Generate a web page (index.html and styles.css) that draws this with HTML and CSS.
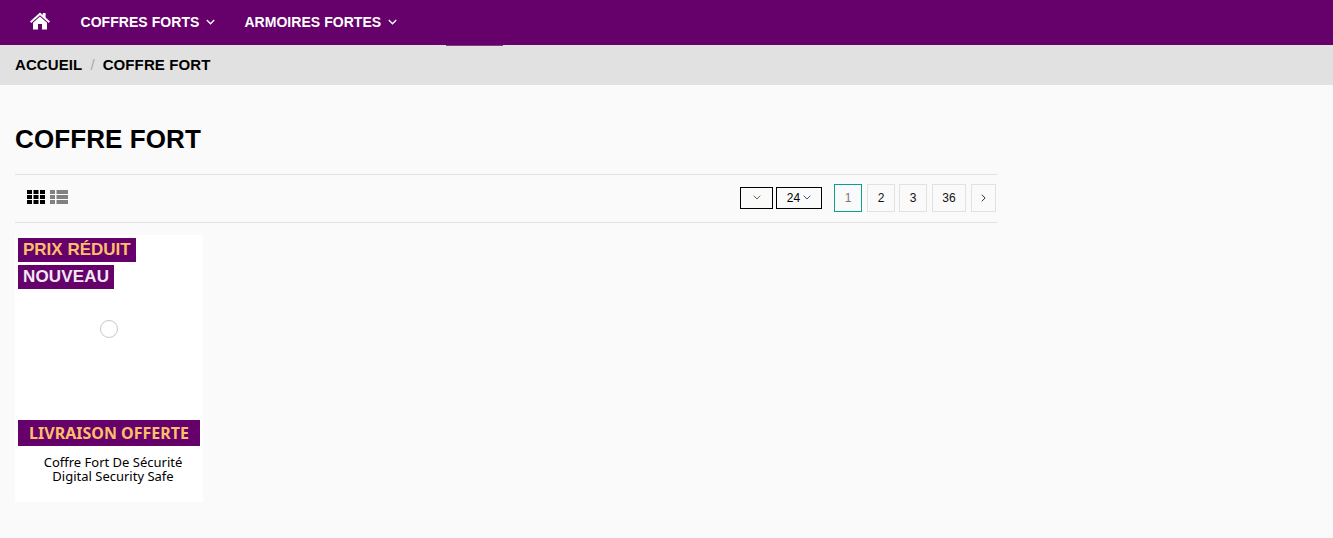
FILE: index.html
```html
<!DOCTYPE html>
<html lang="fr">
<head>
<meta charset="utf-8">
<title>Coffre fort</title>
<link rel="stylesheet" href="styles.css">
</head>
<body>
<header class="topbar">
  <a class="home" href="#" aria-label="Accueil">
    <svg viewBox="0 0 20 18" width="20" height="18"><path fill="#fff" d="M10 0.5 L12.800 3 V1 H15.600 V5.500 L20 9.500 L18.800 10.900 L10 3.300 L1.200 10.900 L0 9.500 Z M10 4.600 L17 10.700 V17.500 H12 V12 H8 V17.500 H3 V10.700 Z"/></svg>
  </a>
  <nav class="menu">
    <a class="menu-item" href="#">COFFRES FORTS <svg class="chev" viewBox="0 0 9 6" width="9" height="6"><path d="M.8 1 4.500 4.700 8.200 1" fill="none" stroke="#fff" stroke-width="1.400"/></svg></a>
    <a class="menu-item" href="#">ARMOIRES FORTES <svg class="chev" viewBox="0 0 9 6" width="9" height="6"><path d="M.8 1 4.500 4.700 8.200 1" fill="none" stroke="#fff" stroke-width="1.400"/></svg></a>
  </nav>
  <span class="marker"></span>
</header>
<div class="crumbs">
  <a href="#">ACCUEIL</a><span class="sep">/</span><a href="#">COFFRE FORT</a>
</div>
<main class="content">
  <h1 class="title">COFFRE FORT</h1>
  <div class="toolbar">
    <div class="views">
      <svg class="view" viewBox="0 0 18 14" width="18" height="14"><path fill="#000" d="M0 0h5v4H0zM6.500 0h5v4h-5zM13 0h5v4h-5zM0 5h5v4H0zM6.500 5h5v4h-5zM13 5h5v4h-5zM0 10h5v4H0zM6.500 10h5v4h-5zM13 10h5v4h-5z"/></svg>
      <svg class="view" viewBox="0 0 18 14" width="18" height="14"><path fill="#808080" d="M0 0h5v4H0zM6.500 0H18v4H6.500zM0 5h5v4H0zM6.500 5H18v4H6.500zM0 10h5v4H0zM6.500 10H18v4H6.500z"/></svg>
    </div>
    <div class="controls">
      <div class="selects">
        <div class="select sel-empty"><svg viewBox="0 0 8 5" width="8" height="5"><path d="M.7.7 4 4 7.300.7" fill="none" stroke="#6b6440" stroke-width="1"/></svg></div>
        <div class="select sel-count">24 <svg viewBox="0 0 8 5" width="8" height="5"><path d="M.7.7 4 4 7.300.7" fill="none" stroke="#33558a" stroke-width="1"/></svg></div>
      </div>
      <div class="pages">
        <a class="page current" href="#">1</a>
        <a class="page" href="#">2</a>
        <a class="page third" href="#">3</a>
        <a class="page wide" href="#">36</a>
        <a class="page" href="#"><svg viewBox="0 0 5 8" width="5" height="8"><path d="M.8.7 4.100 4 .8 7.300" fill="none" stroke="#333" stroke-width="1"/></svg></a>
      </div>
    </div>
  </div>
  <article class="card">
    <div class="labels">
      <span class="label sale">PRIX RÉDUIT</span>
      <span class="label new">NOUVEAU</span>
    </div>
    <div class="spinner-zone"><span class="spinner"></span></div>
    <div class="shipping">LIVRAISON OFFERTE</div>
    <a class="name" href="#">Coffre Fort De Sécurité<br>Digital Security Safe</a>
  </article>
</main>
</body>
</html>
```
FILE: styles.css
```css
* { box-sizing: border-box; }
html, body { margin: 0; padding: 0; }
body {
  height: 538px;
  overflow: hidden;
  background: #fafafa;
  color: #000;
  font-family: "Liberation Sans", Arial, sans-serif;
}
a { color: inherit; text-decoration: none; }

.topbar {
  position: relative;
  display: flex;
  align-items: center;
  height: 45px;
  padding: 0 0 2px 30px;
  background: #66006a;
}
.home { display: flex; width: 20px; height: 18px; margin-top: -2px; }
.menu { display: flex; gap: 29px; margin-left: 30.500px; }
.menu-item {
  display: flex;
  align-items: center;
  gap: 7px;
  color: #fff;
  font-size: 14px;
  font-weight: 700;
  letter-spacing: 0.050px;
  line-height: 16px;
}
.marker {
  position: absolute;
  left: 446px;
  bottom: -1px;
  width: 57px;
  height: 1px;
  background: #7d3f80;
}

.crumbs {
  display: flex;
  align-items: center;
  height: 40px;
  padding: 0 0 1px 15px;
  background: #e1e1e1;
  font-size: 15px;
  font-weight: 700;
  letter-spacing: 0.100px;
  line-height: 18px;
}
.sep { margin: 0 8px; color: #aaa; font-weight: 400; }

.content { width: 997px; padding-left: 15px; }
.title {
  margin: 0;
  padding-top: 39px;
  height: 89px;
  font-size: 26px;
  font-weight: 700;
  letter-spacing: 0.100px;
  line-height: 30px;
}
.toolbar {
  display: flex;
  justify-content: space-between;
  align-items: center;
  height: 49px;
  padding: 0 1px 2px 12px;
  border-top: 1px solid #e1e1e1;
  border-bottom: 1px solid #e1e1e1;
}
.views { display: flex; gap: 5px; margin-top: -1px; }
.controls { display: flex; align-items: center; gap: 12px; }
.selects { display: flex; gap: 3px; }
.select {
  display: flex;
  align-items: center;
  justify-content: center;
  height: 22px;
  border: 1px solid #000;
  font-size: 12px;
}
.sel-empty { width: 33px; }
.sel-count { width: 46px; gap: 3px; }
.pages { display: flex; gap: 5px; }
.page {
  display: flex;
  align-items: center;
  justify-content: center;
  width: 28px;
  height: 28px;
  border: 1px solid #e1e1e1;
  font-size: 12px;
  color: #111;
}
.page.third { margin-left: -1px; }
.page.wide { width: 34px; }
.page.current { border-color: #0aa28f; color: #777; }
.page:last-child { width: 25px; }

.card {
  display: flex;
  flex-direction: column;
  width: 188px;
  height: 267px;
  margin-top: 12px;
  padding: 3px 3px 0;
  background: #fff;
  text-align: center;
}
.labels { display: flex; flex-direction: column; align-items: flex-start; gap: 3px; }
.label {
  height: 24px;
  padding: 0 5px;
  background: #66006a;
  font-size: 17px;
  font-weight: 700;
  line-height: 23px;
}
.sale { color: #fbbf6b; }
.new { color: #eeeaf2; letter-spacing: 0.150px; }
.spinner-zone {
  display: flex;
  justify-content: center;
  height: 131px;
  padding-top: 31px;
}
.spinner {
  width: 18px;
  height: 18px;
  border: 1px solid #c8c8c8;
  border-radius: 50%;
}
.shipping {
  height: 26px;
  background: #66006a;
  color: #fbbf6b;
  font-family: "Noto Sans", sans-serif;
  font-size: 16px;
  font-weight: 700;
  line-height: 26px;
}
.name {
  display: block;
  margin-top: 9px;
  padding-left: 8px;
  font-family: "Noto Sans", sans-serif;
  font-size: 13px;
  font-weight: 400;
  line-height: 14px;
}
```
